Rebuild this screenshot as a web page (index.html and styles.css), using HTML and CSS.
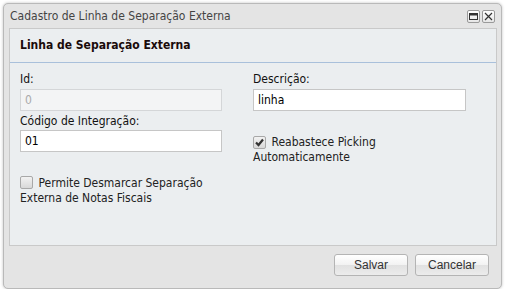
FILE: index.html
```html
<!DOCTYPE html>
<html lang="pt">
<head>
  <meta charset="UTF-8">
  <title>Cadastro de Linha de Separação Externa</title>
  <link rel="stylesheet" href="styles.css">
</head>
<body>

  <div class="window">
    <!-- Title bar -->
    <div class="window-title">
      <span class="title-text">Cadastro de Linha de Separação Externa</span>
      <div class="tools">
        <span class="tool">
          <svg width="11" height="11" viewBox="0 0 11 11"><rect x="1.5" y="2.5" width="8" height="6" fill="none" stroke="#333" stroke-width="1"/><rect x="1.5" y="2.5" width="8" height="2" fill="#333"/></svg>
        </span>
        <span class="tool">
          <svg width="11" height="11" viewBox="0 0 11 11"><path d="M2 2 L9 9 M9 2 L2 9" stroke="#333" stroke-width="1.2"/></svg>
        </span>
      </div>
    </div>

    <!-- Form panel -->
    <div class="panel">
      <div class="panel-header">Linha de Separação Externa</div>
      <div class="panel-body">
        <div class="col col-left">
          <label class="field-label">Id:</label>
          <input class="field disabled" type="text" value="0" disabled>
          <label class="field-label second">Código de Integração:</label>
          <input class="field" type="text" value="01">
          <div class="check-row left-check">
            <span class="checkbox"></span> Permite Desmarcar Separação Externa de Notas Fiscais
          </div>
        </div>
        <div class="col col-right">
          <label class="field-label">Descrição:</label>
          <input class="field" type="text" value="linha">
          <div class="check-row right-check">
            <span class="checkbox checked">
              <svg width="11" height="11" viewBox="0 0 11 11"><path d="M2 5.5 L4.5 8 L9 2.5" fill="none" stroke="#333" stroke-width="2.2"/></svg>
            </span> Reabastece Picking Automaticamente
          </div>
        </div>
      </div>
    </div>

    <!-- Buttons -->
    <div class="buttons">
      <button class="btn">Salvar</button>
      <button class="btn">Cancelar</button>
    </div>
  </div>

</body>
</html>
```

FILE: styles.css
```css
* {
  margin: 0;
  padding: 0;
  box-sizing: border-box;
}

body {
  background-color: #fff;
  font-family: 'DejaVu Sans Condensed', 'DejaVu Sans', sans-serif;
  font-size: 12px;
  color: #000;
}

/* Window */
.window {
  margin: 3px 0 0 3px;
  width: 499px;
  height: 286px;
  border: 1px solid #b9b9b9;
  border-radius: 5px;
  background-color: #e4e4e4;
  box-shadow: 0 0 3px rgba(0, 0, 0, 0.25);
}

.window-title {
  display: flex;
  justify-content: space-between;
  align-items: center;
  height: 24px;
  padding: 0 6px 0 6px;
}

.title-text {
  color: #444;
  font-size: 12px;
}

.tools {
  display: flex;
  gap: 2px;
  margin-top: 1px;
}

.tool {
  display: flex;
  align-items: center;
  justify-content: center;
  width: 13px;
  height: 13px;
  border: 1px solid #9a9a9a;
  border-radius: 2px;
  background: linear-gradient(#fff, #e6e6e6);
}

/* Panel */
.panel {
  margin: 0 4px 0 5px;
  height: 218px;
  border: 1px solid #c9c9c9;
  background-color: #ebeef0;
}

.panel-header {
  height: 34px;
  line-height: 33px;
  padding-left: 10px;
  font-size: 12px;
  font-weight: bold;
  color: #1a0a0a;
  border-bottom: 1px solid #a9c0db;
}

.panel-body {
  display: grid;
  grid-template-columns: 202px 213px;
  column-gap: 31px;
  padding: 8px 10px 0 10px;
}

.col {
  display: flex;
  flex-direction: column;
}

.field-label {
  display: block;
  height: 16px;
  line-height: 16px;
  color: #111;
  margin-bottom: 2px;
}

.field-label.second {
  margin-top: 2px;
  margin-bottom: 1px;
}

.field {
  width: 100%;
  height: 22px;
  padding: 0 4px;
  border: 1px solid #c6c6c6;
  background-color: #fff;
  font-family: 'DejaVu Sans Condensed', 'DejaVu Sans', sans-serif;
  font-size: 12px;
  color: #000;
  outline: none;
}

.field.disabled {
  background-color: #f3f4f5;
  color: #aaa;
  border-color: #d4d6d8;
}

/* Checkboxes */
.check-row {
  line-height: 15px;
  color: #222;
}

.left-check {
  margin-top: 24px;
}

.right-check {
  margin-top: 24px;
}

.checkbox {
  display: inline-flex;
  align-items: center;
  justify-content: center;
  width: 13px;
  height: 13px;
  margin-right: 2px;
  vertical-align: -2px;
  border: 1px solid #a8a8a8;
  border-radius: 2px;
  background: linear-gradient(#f2f2f2, #d8d8d8);
}

/* Buttons */
.buttons {
  display: flex;
  justify-content: flex-end;
  gap: 7px;
  padding: 8px 12px 0 0;
}

.btn {
  width: 74px;
  height: 22px;
  border: 1px solid #b4b4b4;
  border-radius: 3px;
  background: linear-gradient(#fff 0%, #f2f2f2 50%, #e1e1e1 51%, #ececec 100%);
  font-family: 'Liberation Sans', Arial, sans-serif;
  font-size: 12px;
  color: #333;
  cursor: pointer;
}
```
